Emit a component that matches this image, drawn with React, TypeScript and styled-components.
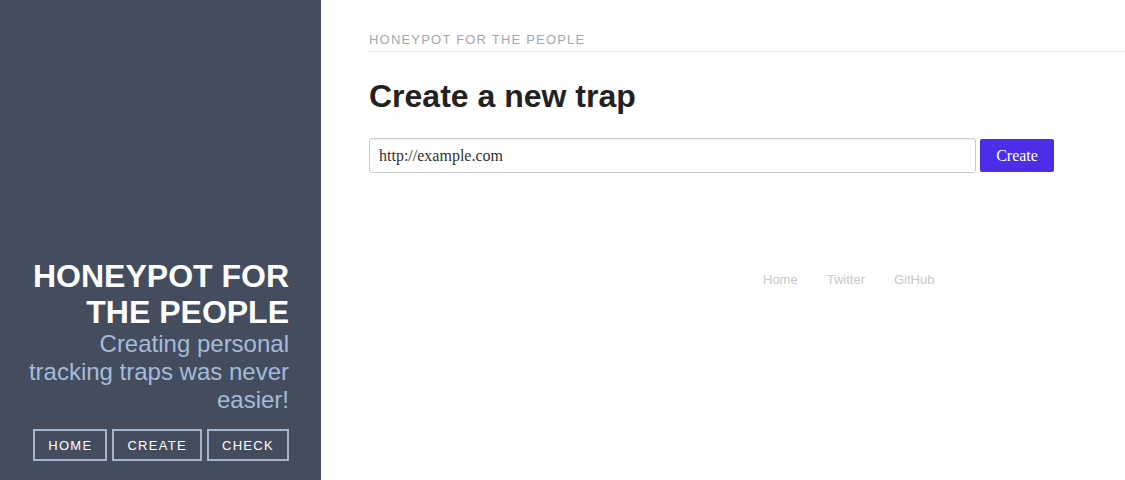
import React from "react";
import styled, { createGlobalStyle } from "styled-components";

const Global = createGlobalStyle`
  html, body { margin: 0; padding: 0; height: 100%; }
  body { font-family: "Liberation Sans", Arial, sans-serif; background: #fff; }
  #root { height: 100%; }
`;

const Layout = styled.div`
  display: flex;
  height: 480px;
  width: 1125px;
`;

const Sidebar = styled.aside`
  width: 321px;
  flex: none;
  background: #434d5e;
  display: flex;
  flex-direction: column;
  justify-content: flex-end;
  align-items: flex-end;
  box-sizing: border-box;
  padding: 0 32px 19px 24px;
  text-align: right;
`;

const Title = styled.h1`
  margin: 0;
  font-size: 32px;
  line-height: 36px;
  font-weight: 700;
  color: #ffffff;
`;

const Tagline = styled.p`
  margin: 0;
  font-size: 24px;
  line-height: normal;
  color: #a5bcd8;
`;

const NavRow = styled.nav`
  display: flex;
  gap: 5px;
  margin-top: 15px;
`;

const NavButton = styled.a`
  display: flex;
  align-items: center;
  height: 32px;
  box-sizing: border-box;
  padding: 0 13px;
  border: 2px solid #a3b6cf;
  color: #ffffff;
  font-size: 13px;
  letter-spacing: 1.3px;
  text-transform: uppercase;
  text-decoration: none;
`;

const Main = styled.main`
  flex: 1;
  padding: 32px 0 0 48px;
  box-sizing: border-box;
`;

const TopBar = styled.div`
  font-size: 13px;
  line-height: 16px;
  letter-spacing: 1.2px;
  color: #a3a9b3;
  padding-bottom: 3px;
  border-bottom: 1px solid #ececec;
  text-transform: uppercase;
`;

const Heading = styled.h2`
  margin: 26px 0 0;
  font-size: 32px;
  line-height: 36px;
  font-weight: 700;
  color: #222222;
`;

const Form = styled.form`
  display: flex;
  align-items: center;
  gap: 4px;
  margin-top: 24px;
`;

const UrlInput = styled.input`
  width: 607px;
  height: 35px;
  box-sizing: border-box;
  border: 1px solid #cccccc;
  border-radius: 3px;
  padding: 0 9px;
  font-family: "Liberation Serif", "Times New Roman", serif;
  font-size: 16px;
  color: #333;
  box-shadow: inset 0 1px 1px rgba(0, 0, 0, 0.06);
`;

const SubmitButton = styled.button`
  width: 74px;
  height: 33px;
  border: none;
  border-radius: 2px;
  background: #4a2ee8;
  color: #ffffff;
  font-family: "Liberation Serif", "Times New Roman", serif;
  font-size: 16px;
  padding: 0;
`;

const Footer = styled.footer`
  display: flex;
  gap: 29px;
  margin-top: 99px;
  padding-left: 394px;
`;

const FooterLink = styled.a`
  font-size: 13px;
  line-height: 16px;
  color: #c8c8c8;
  text-decoration: none;
`;

export default function App() {
  return (
    <>
      <Global />
      <Layout>
        <Sidebar>
          <Title>
            HONEYPOT FOR
            <br />
            THE PEOPLE
          </Title>
          <Tagline>
            Creating personal
            <br />
            tracking traps was never
            <br />
            easier!
          </Tagline>
          <NavRow>
            <NavButton href="#">Home</NavButton>
            <NavButton href="#">Create</NavButton>
            <NavButton href="#">Check</NavButton>
          </NavRow>
        </Sidebar>
        <Main>
          <TopBar>Honeypot for the people</TopBar>
          <Heading>Create a new trap</Heading>
          <Form onSubmit={(e) => e.preventDefault()}>
            <UrlInput type="text" defaultValue="http://example.com" />
            <SubmitButton type="submit">Create</SubmitButton>
          </Form>
          <Footer>
            <FooterLink href="#">Home</FooterLink>
            <FooterLink href="#">Twitter</FooterLink>
            <FooterLink href="#">GitHub</FooterLink>
          </Footer>
        </Main>
      </Layout>
    </>
  );
}
